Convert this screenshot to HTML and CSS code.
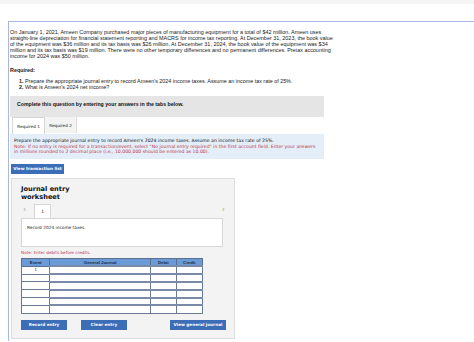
FILE: index.html
```html
<!DOCTYPE html>
<html lang="en">
	<head>
		<meta charset="utf-8">
		<title>Journal entry worksheet</title>
		<link rel="stylesheet" href="styles.css">
	</head>
	<body>
		<div class="top-band"></div>
		<div class="question">
			<p class="intro">On January 1, 2021, Ameen Company purchased major pieces of manufacturing equipment for a total of $42 million. Ameen uses straight-line depreciation for financial statement reporting and MACRS for income tax reporting. At December 31, 2023, the book value of the equipment was $36 million and its tax basis was $26 million. At December 31, 2024, the book value of the equipment was $34 million and its tax basis was $19 million. There were no other temporary differences and no permanent differences. Pretax accounting income for 2024 was $50 million.</p>
			<div class="content">
				<p class="req-title">Required:</p>
				<ol class="req-list">
					<li>Prepare the appropriate journal entry to record Ameen's 2024 income taxes. Assume an income tax rate of 25%.</li>
					<li>What is Ameen's 2024 net income?</li>
				</ol>
				<div class="complete">Complete this question by entering your answers in the tabs below.</div>
				<div class="tabs">
					<div class="tab active">Required 1</div>
					<div class="tab">Required 2</div>
				</div>
				<div class="info">
					<p class="info-main">Prepare the appropriate journal entry to record Ameen's 2024 income taxes. Assume an income tax rate of 25%.</p>
					<p class="info-note">Note: If no entry is required for a transaction/event, select "No journal entry required" in the first account field. Enter your answers in millions rounded to 2 decimal place (i.e., 10,000,000 should be entered as 10.00).</p>
				</div>
			</div>
			<button class="btn btn-list">View transaction list</button>
			<div class="worksheet">
				<h3 class="ws-title">Journal entry<br>worksheet</h3>
				<div class="ws-nav">
					<span class="chev">&lsaquo;</span>
					<span class="ws-tab">1</span>
					<span class="chev chev-right">&rsaquo;</span>
				</div>
				<div class="record-box">Record 2024 income taxes.</div>
				<p class="ws-note">Note: Enter debits before credits.</p>
				<table class="journal">
					<thead>
						<tr><th class="c-event">Event</th><th class="c-gj">General Journal</th><th class="c-dr">Debit</th><th class="c-cr">Credit</th></tr>
					</thead>
					<tbody>
						<tr><td class="event">1</td><td class="field"></td><td class="field"></td><td class="field"></td></tr>
						<tr><td class="event"></td><td class="field"></td><td class="field"></td><td class="field"></td></tr>
						<tr><td class="event"></td><td class="field"></td><td class="field"></td><td class="field"></td></tr>
						<tr><td class="event"></td><td class="field"></td><td class="field"></td><td class="field"></td></tr>
						<tr><td class="event"></td><td class="field"></td><td class="field"></td><td class="field"></td></tr>
						<tr><td class="event"></td><td class="field"></td><td class="field"></td><td class="field"></td></tr>
					</tbody>
				</table>
				<div class="ws-actions">
					<button class="btn btn-record">Record entry</button>
					<button class="btn btn-clear">Clear entry</button>
					<button class="btn btn-view">View general journal</button>
				</div>
			</div>
		</div>
	</body>
</html>
```

FILE: styles.css
```css
body {
	margin: 0;
	overflow: hidden;
	font-family: "Liberation Sans", Arial, sans-serif;
	color: #222;
	background: #fff;
}

.top-band {
	height: 4px;
	background: #f4f4f4;
}

.question {
	margin: 17px 0 0 8px;
	border-top: 1px solid #a9b8e2;
	border-left: 1px solid #a9b8e2;
	padding: 8px 0 0 1px;
	height: 320px;
	box-sizing: border-box;
}

.intro {
	width: 326px;
	margin: 0;
	font-size: 5.45px;
	line-height: 5.9px;
}

.content {
	width: 314px;
}

.req-title {
	margin: 7px 0 0;
	font-size: 5.4px;
	font-weight: bold;
}

.req-list {
	margin: 5px 0 0;
	padding-left: 15px;
	font-size: 5.4px;
	line-height: 6.4px;
}

.req-list li::marker {
	font-weight: bold;
}

.complete {
	margin-top: 6px;
	background: #e5e5e5;
	padding: 5px 7px 10px;
	font-size: 5.2px;
	font-weight: bold;
	color: #111;
}

.tabs {
	display: flex;
	padding-left: 2px;
	font-family: "DejaVu Sans", Verdana, sans-serif;
	font-size: 4.2px;
}

.tab {
	width: 31px;
	height: 16px;
	display: flex;
	align-items: center;
	justify-content: center;
	background: #f3f3f3;
	border-right: 1px solid #dcdcdc;
}

.tab.active {
	background: #fff;
	border: 1px solid #d6d6d6;
	border-bottom: none;
}

.info {
	background: #e3eef8;
	padding: 4px 4px 4px;
	font-family: "DejaVu Sans", Verdana, sans-serif;
	font-size: 4.6px;
	line-height: 5.5px;
}

.info p {
	margin: 0;
}

.info-main {
	color: #111;
}

.info-note {
	color: #c0344a;
}

.btn {
	font-family: "DejaVu Sans", Verdana, sans-serif;
	font-size: 4.2px;
	font-weight: bold;
	color: #fff;
	background: #3c6db7;
	border: none;
	padding: 0;
	height: 10px;
	cursor: pointer;
}

.btn-list {
	display: block;
	margin: 5px 0 0 1px;
	width: 53px;
}

.worksheet {
	width: 224px;
	height: 161px;
	margin: 4px 0 0 1px;
	background: #f3f3f3;
	border: 1px solid #dedede;
	padding: 6px 0 0 9px;
	box-sizing: border-box;
}

.ws-title {
	margin: 0;
	font-family: "DejaVu Sans", Verdana, sans-serif;
	font-size: 6.6px;
	line-height: 8px;
	font-weight: bold;
	color: #111;
}

.ws-nav {
	display: flex;
	align-items: flex-end;
	width: 204px;
	height: 14px;
	margin-top: 3px;
	padding-left: 2px;
	box-sizing: border-box;
}

.chev {
	font-family: "DejaVu Sans", sans-serif;
	font-size: 8px;
	color: #aaa;
	align-self: center;
	margin-top: -2px;
}

.chev-right {
	margin-left: auto;
}

.ws-tab {
	width: 15px;
	height: 13px;
	margin-left: 8px;
	background: #fff;
	border: 1px solid #d6d6d6;
	border-bottom: none;
	font-family: "DejaVu Sans", Verdana, sans-serif;
	font-size: 4.5px;
	display: flex;
	align-items: center;
	justify-content: center;
}

.record-box {
	width: 202px;
	height: 29px;
	box-sizing: border-box;
	background: #fff;
	border: 1px solid #d6d6d6;
	padding: 6px 5px;
	font-family: "DejaVu Sans", Verdana, sans-serif;
	font-size: 4.3px;
}

.ws-note {
	margin: 3px 0 0;
	font-family: "DejaVu Sans", Verdana, sans-serif;
	font-size: 4.2px;
	line-height: 5px;
	color: #c0344a;
}

.journal {
	margin-top: 3px;
	border-collapse: collapse;
	width: 182px;
	font-family: "Liberation Sans", Arial, sans-serif;
	font-size: 4.3px;
}

.journal thead tr {
	height: 8px;
}

.journal tbody tr {
	height: 7.8px;
}

.journal th {
	background: #6b9bd6;
	color: #1b2a44;
	font-weight: bold;
	padding: 0;
	border: 1px solid #5b6f8f;
}

.journal td {
	padding: 0;
	border: 1px solid #6b7a94;
	background: #fff;
}

.c-event { width: 28px; }
.c-gj { width: 103px; }
.c-dr { width: 25px; }
.c-cr { width: 26px; }

.journal td.event {
	text-align: center;
	vertical-align: top;
	font-size: 4.3px;
}

.journal td.field {
	border-top: 2px solid #7a8aa8;
	border-left: 1.5px solid #4f5e78;
}

.ws-actions {
	display: flex;
	margin-top: 6px;
	width: 205px;
}

.btn-record {
	width: 46px;
}

.btn-clear {
	width: 46px;
	margin-left: 14px;
}

.btn-view {
	width: 56px;
	margin-left: auto;
}
```
